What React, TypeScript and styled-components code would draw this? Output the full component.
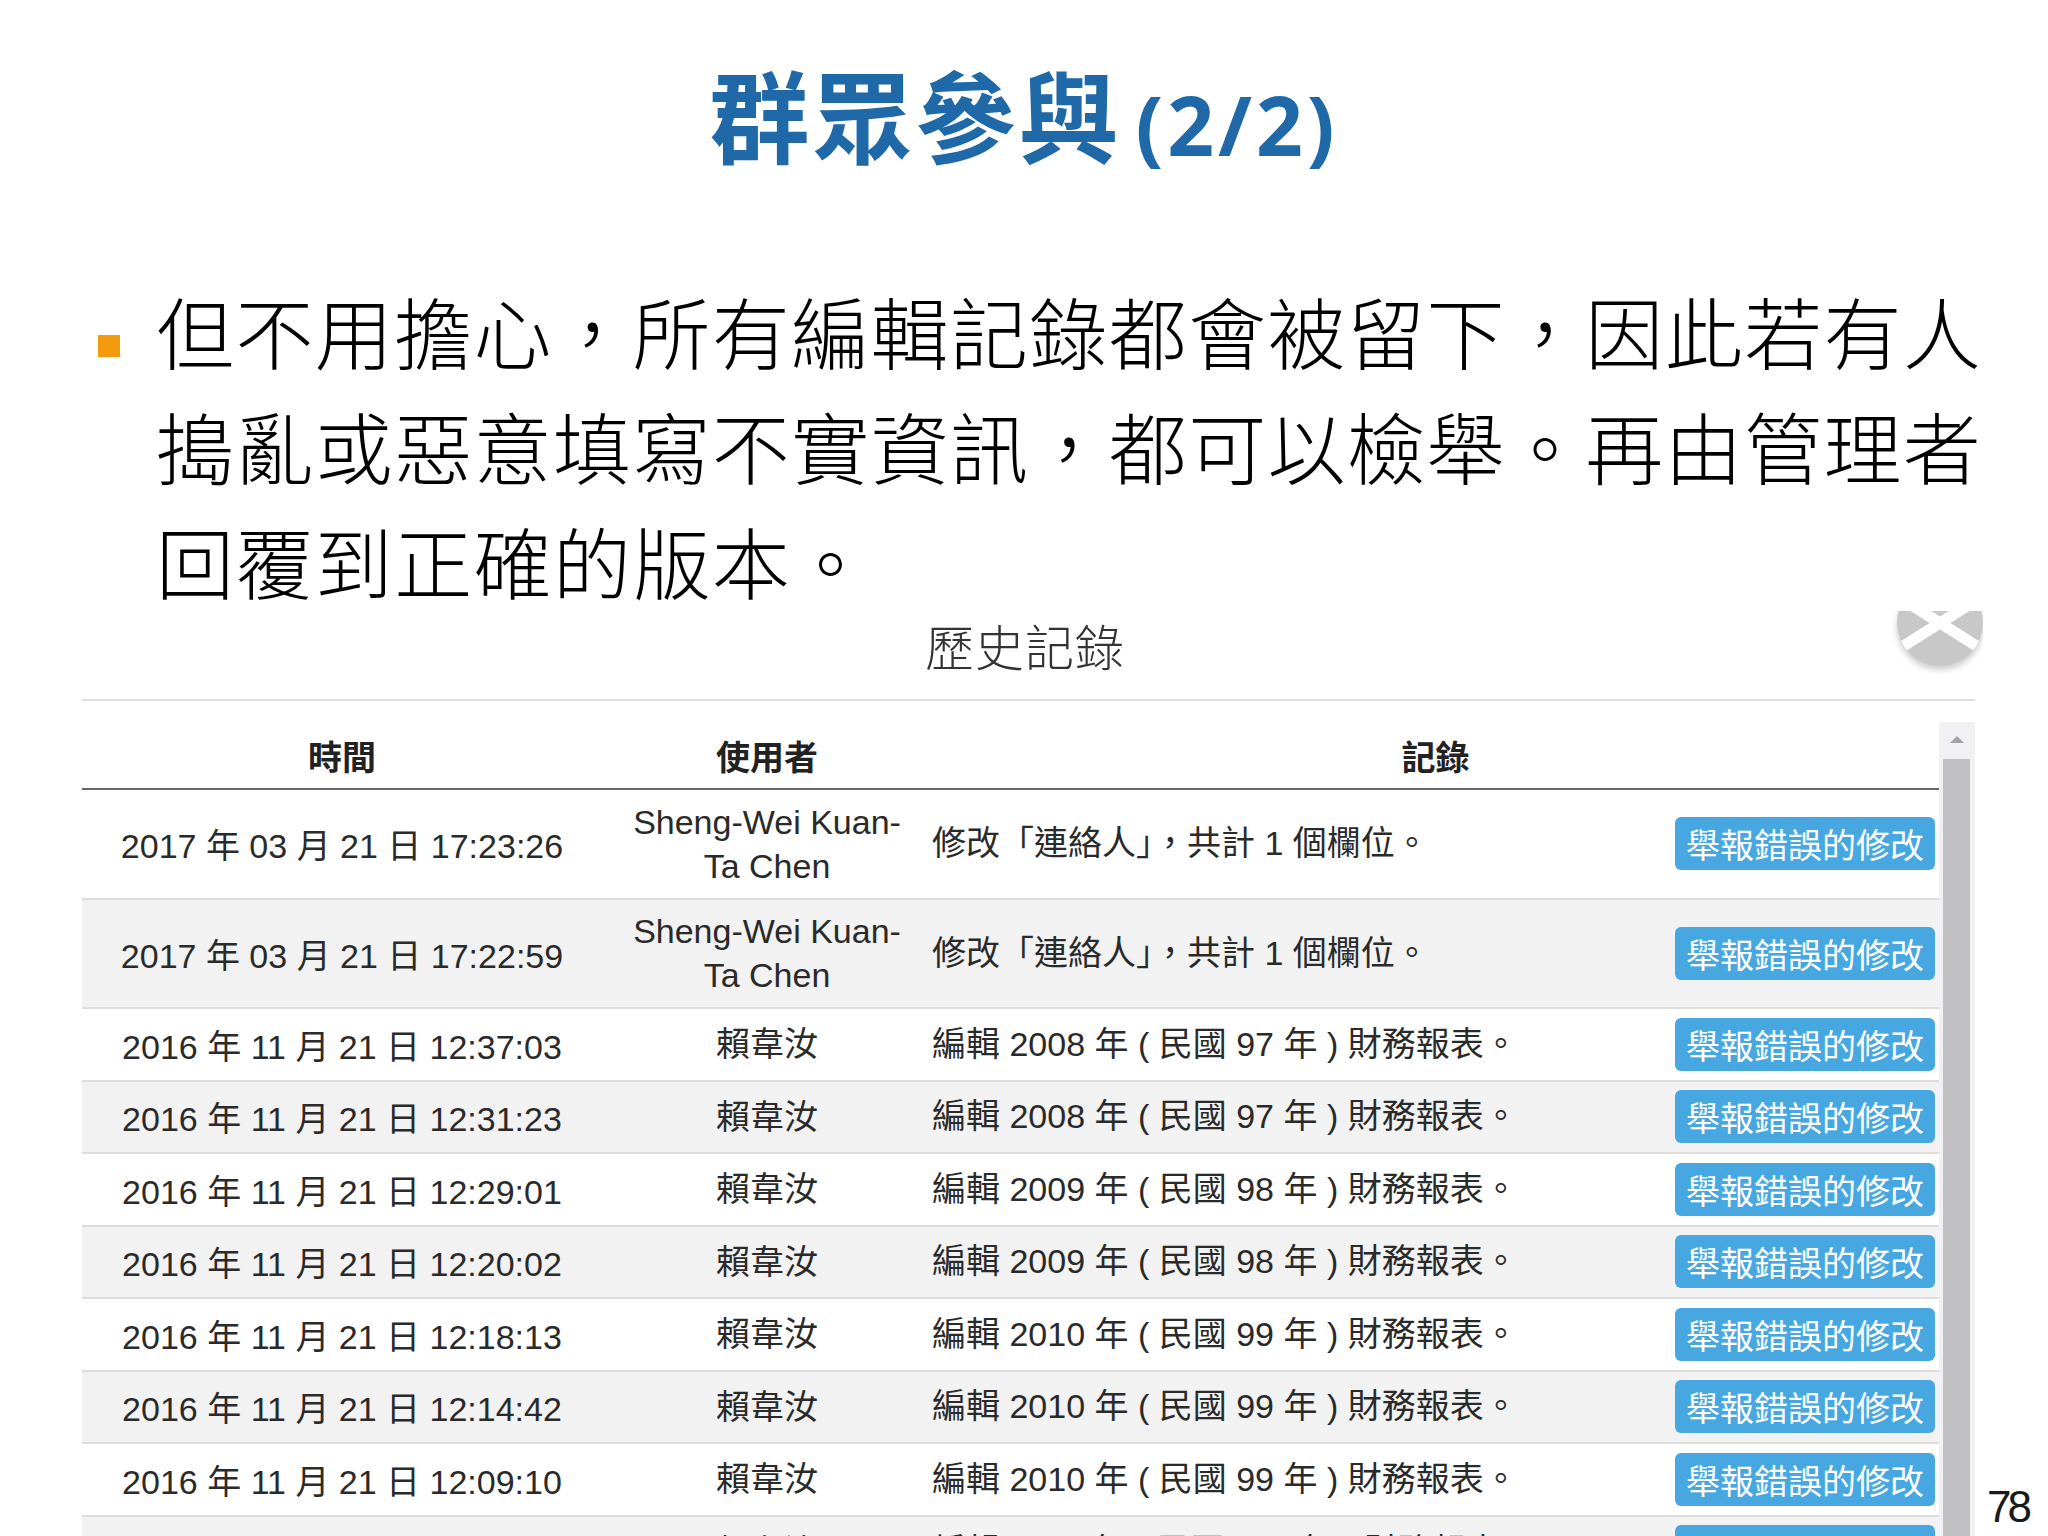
import React from "react";
import styled, { createGlobalStyle } from "styled-components";

const CJK = `"Noto Sans CJK TC", "Noto Sans CJK SC", sans-serif`;
const UI = `"Liberation Sans", "Noto Sans CJK TC", sans-serif`;

const GlobalStyle = createGlobalStyle`
  html, body { margin: 0; padding: 0; background: #ffffff; }
  body { width: 2048px; height: 1536px; overflow: hidden; }
  #root { width: 2048px; height: 1536px; }
`;

const Slide = styled.main`
  width: 2048px;
  height: 1536px;
  overflow: hidden;
  display: flex;
  flex-direction: column;
  background: #ffffff;
  font-family: ${CJK};
`;

const Title = styled.h1`
  flex: 0 0 100px;
  height: 100px;
  margin: 63px 0 0;
  text-align: center;
  font-family: ${CJK};
  font-weight: 700;
  font-size: 100px;
  line-height: 100px;
  letter-spacing: 3px;
  color: #1f69a9;
  white-space: nowrap;
`;

const TitleLatin = styled.span`
  font-family: "Open Sans", "Liberation Sans", sans-serif;
  font-weight: 700;
  font-size: 82px;
  line-height: 1;
  letter-spacing: 4px;
  margin-left: 14px;
`;

const Bullets = styled.ul`
  list-style: none;
  margin: 110px 0 0;
  padding: 0 0 0 98px;
`;

const BulletItem = styled.li`
  display: flex;
  align-items: flex-start;
`;

const BulletMark = styled.span`
  flex: 0 0 22px;
  height: 22px;
  margin-top: 62px;
  background: #f39a0f;
`;

const BulletText = styled.p`
  width: 1836px;
  margin: 0 0 0 36px;
  font-family: ${CJK};
  font-weight: 300;
  font-size: 78px;
  line-height: 115px;
  letter-spacing: 1.4px;
  color: #000000;
`;

const Lower = styled.section`
  flex: 1;
  min-height: 0;
  display: flex;
  margin-top: -7px;
  padding-left: 82px;
`;

const Modal = styled.div`
  position: relative;
  flex: 0 0 1901px;
  display: flex;
  flex-direction: column;
  overflow: hidden;
`;

const ModalHeader = styled.header`
  box-sizing: border-box;
  flex: 0 0 90px;
  height: 90px;
  margin-right: 8px;
  padding: 0 7px 22px 0;
  display: flex;
  align-items: center;
  justify-content: center;
  border-bottom: 2px solid #dedede;
`;

const ModalTitle = styled.h2`
  margin: 0;
  font-family: ${CJK};
  font-weight: 300;
  font-size: 49px;
  line-height: 1;
  letter-spacing: 1px;
  color: #333333;
`;

const CloseButton = styled.button`
  position: absolute;
  top: -31px;
  right: 0;
  width: 86px;
  height: 86px;
  padding: 0;
  border: none;
  background: transparent;
  filter: drop-shadow(0 4px 3px rgba(0, 0, 0, 0.2));
  svg { display: block; }
`;

const ModalBody = styled.div`
  flex: 1;
  min-height: 0;
  display: flex;
  margin-right: 8px;
  padding-top: 21px;
`;

const TableViewport = styled.div`
  flex: 1;
  min-width: 0;
  overflow: hidden;
`;

const Scrollbar = styled.div`
  flex: 0 0 36px;
  display: flex;
  flex-direction: column;
  background: #f1f0f2;
`;

const ScrollUp = styled.div`
  flex: 0 0 35px;
  display: flex;
  align-items: center;
  justify-content: center;
  &::before {
    content: "";
    width: 0;
    height: 0;
    border-left: 7px solid transparent;
    border-right: 7px solid transparent;
    border-bottom: 7px solid #a3a3a3;
  }
`;

const ScrollThumb = styled.div`
  flex: 1;
  margin: 2px 5px 0 4px;
  background: #c1c0c3;
`;

const Table = styled.table`
  width: 100%;
  border-collapse: separate;
  border-spacing: 0;
  table-layout: fixed;
  font-family: ${UI};
  font-size: 34px;
  color: #2a2a2a;
`;

const Th = styled.th`
  height: 68px;
  box-sizing: border-box;
  padding: 0;
  font-family: ${CJK};
  font-weight: 700;
  font-size: 34px;
  text-align: center;
  vertical-align: middle;
  color: #222222;
  border-bottom: 2px solid #666666;
`;

const Row = styled.tr<{ $tall: boolean; $striped: boolean }>`
  height: ${(p) => (p.$tall ? 109.5 : 72.5)}px;
  background: ${(p) => (p.$striped ? "#f2f2f3" : "#ffffff")};
`;

const Cell = styled.td<{ $align?: "left" | "center" | "right" }>`
  padding: 0;
  vertical-align: middle;
  text-align: ${(p) => p.$align ?? "left"};
  border-bottom: 2px solid #dddddd;
  white-space: nowrap;
`;

const UserCell = styled(Cell)`
  padding: 0 22px;
  line-height: 44px;
  white-space: normal;
`;

const RecordCell = styled(Cell)`
  padding-bottom: 6px;
`;

const ActionCell = styled(Cell)`
  padding-right: 4px;
`;

const ReportButton = styled.button`
  display: block;
  margin-left: auto;
  height: 53px;
  padding: 0 11px;
  border: none;
  border-radius: 6px;
  background: #47a8e1;
  color: #ffffff;
  font-family: ${CJK};
  font-size: 34px;
  line-height: 53px;
  white-space: nowrap;
`;

const PageNumber = styled.div`
  align-self: flex-end;
  margin-left: 4px;
  padding-bottom: 7px;
  font-family: "Liberation Sans Narrow", "Liberation Sans", sans-serif;
  font-size: 44px;
  line-height: 44px;
  letter-spacing: -4px;
  color: #1a1a1a;
`;

type Entry = { time: string; user: string; record: string };

const fin = (y: number) => `編輯 ${y} 年 ( 民國 ${y - 1911} 年 ) 財務報表。`;
const contact = "修改「連絡人」，共計 1 個欄位。";
const day = "2016 年 11 月 21 日";

const entries: Entry[] = [
  { time: "2017 年 03 月 21 日 17:23:26", user: "Sheng-Wei Kuan-Ta Chen", record: contact },
  { time: "2017 年 03 月 21 日 17:22:59", user: "Sheng-Wei Kuan-Ta Chen", record: contact },
  { time: `${day} 12:37:03`, user: "賴韋汝", record: fin(2008) },
  { time: `${day} 12:31:23`, user: "賴韋汝", record: fin(2008) },
  { time: `${day} 12:29:01`, user: "賴韋汝", record: fin(2009) },
  { time: `${day} 12:20:02`, user: "賴韋汝", record: fin(2009) },
  { time: `${day} 12:18:13`, user: "賴韋汝", record: fin(2010) },
  { time: `${day} 12:14:42`, user: "賴韋汝", record: fin(2010) },
  { time: `${day} 12:09:10`, user: "賴韋汝", record: fin(2010) },
  { time: `${day} 12:05:41`, user: "賴韋汝", record: fin(2011) },
  { time: `${day} 12:01:17`, user: "賴韋汝", record: fin(2011) },
];

const CloseIcon = () => (
  <svg width="86" height="86" viewBox="0 0 86 86" aria-hidden="true">
    <defs>
      <clipPath id="closeClip">
        <circle cx="43" cy="43" r="43" />
      </clipPath>
    </defs>
    <circle cx="43" cy="43" r="43" fill="#c8c8c8" />
    <g clipPath="url(#closeClip)" stroke="#ffffff" strokeWidth="11">
      <line x1="-4" y1="13.5" x2="90" y2="72.5" />
      <line x1="90" y1="13.5" x2="-4" y2="72.5" />
    </g>
  </svg>
);

export default function App() {
  return (
    <>
      <GlobalStyle />
      <Slide lang="zh-Hant-TW">
        <Title>
          群眾參與<TitleLatin>(2/2)</TitleLatin>
        </Title>
        <Bullets>
          <BulletItem>
            <BulletMark />
            <BulletText>
              但不用擔心，所有編輯記錄都會被留下，因此若有人搗亂或惡意填寫不實資訊，都可以檢舉。再由管理者回覆到正確的版本。
            </BulletText>
          </BulletItem>
        </Bullets>
        <Lower>
          <Modal>
            <ModalHeader>
              <ModalTitle>歷史記錄</ModalTitle>
            </ModalHeader>
            <CloseButton type="button" aria-label="關閉">
              <CloseIcon />
            </CloseButton>
            <ModalBody>
              <TableViewport>
                <Table>
                  <colgroup>
                    <col style={{ width: 520 }} />
                    <col style={{ width: 330 }} />
                    <col />
                    <col style={{ width: 278 }} />
                  </colgroup>
                  <thead>
                    <tr>
                      <Th>時間</Th>
                      <Th>使用者</Th>
                      <Th colSpan={2}>記錄</Th>
                    </tr>
                  </thead>
                  <tbody>
                    {entries.map((e, i) => (
                      <Row key={i} $tall={/[A-Za-z]/.test(e.user)} $striped={i % 2 === 1}>
                        <Cell $align="center">{e.time}</Cell>
                        <UserCell $align="center">{e.user}</UserCell>
                        <RecordCell>{e.record}</RecordCell>
                        <ActionCell>
                          <ReportButton type="button">舉報錯誤的修改</ReportButton>
                        </ActionCell>
                      </Row>
                    ))}
                  </tbody>
                </Table>
              </TableViewport>
              <Scrollbar>
                <ScrollUp />
                <ScrollThumb />
              </Scrollbar>
            </ModalBody>
          </Modal>
          <PageNumber>78</PageNumber>
        </Lower>
      </Slide>
    </>
  );
}
